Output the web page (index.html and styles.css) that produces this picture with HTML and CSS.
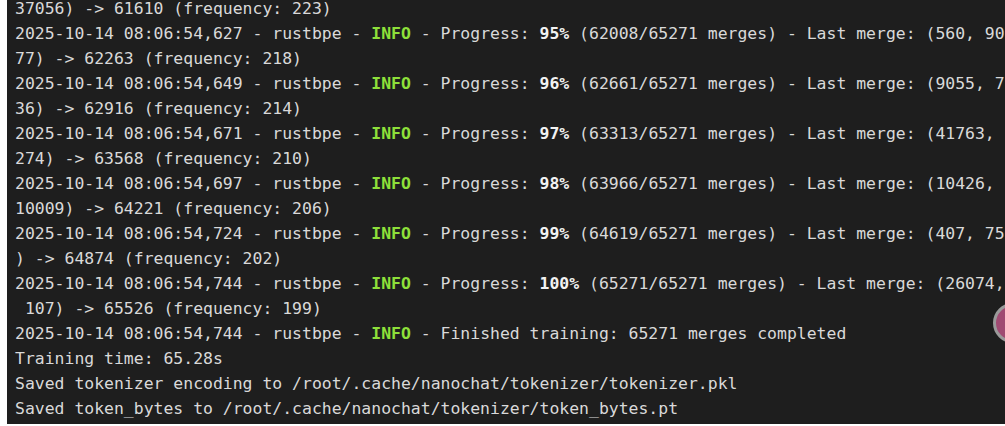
FILE: index.html
```html
<!DOCTYPE html>
<html>
<head>
<meta charset="utf-8">
<link rel="stylesheet" href="styles.css">
</head>
<body>
<div class="terminal">
<div class="log">
<div class="ln">37056) -&gt; 61610 (frequency: 223)</div>
<div class="ln">2025-10-14 08:06:54,627 - rustbpe - <span class="info">INFO</span> - Progress: <b>95%</b> (62008/65271 merges) - Last merge: (560, 90</div>
<div class="ln">77) -&gt; 62263 (frequency: 218)</div>
<div class="ln">2025-10-14 08:06:54,649 - rustbpe - <span class="info">INFO</span> - Progress: <b>96%</b> (62661/65271 merges) - Last merge: (9055, 7</div>
<div class="ln">36) -&gt; 62916 (frequency: 214)</div>
<div class="ln">2025-10-14 08:06:54,671 - rustbpe - <span class="info">INFO</span> - Progress: <b>97%</b> (63313/65271 merges) - Last merge: (41763,</div>
<div class="ln">274) -&gt; 63568 (frequency: 210)</div>
<div class="ln">2025-10-14 08:06:54,697 - rustbpe - <span class="info">INFO</span> - Progress: <b>98%</b> (63966/65271 merges) - Last merge: (10426,</div>
<div class="ln">10009) -&gt; 64221 (frequency: 206)</div>
<div class="ln">2025-10-14 08:06:54,724 - rustbpe - <span class="info">INFO</span> - Progress: <b>99%</b> (64619/65271 merges) - Last merge: (407, 75</div>
<div class="ln">) -&gt; 64874 (frequency: 202)</div>
<div class="ln">2025-10-14 08:06:54,744 - rustbpe - <span class="info">INFO</span> - Progress: <b>100%</b> (65271/65271 merges) - Last merge: (26074,</div>
<div class="ln"> 107) -&gt; 65526 (frequency: 199)</div>
<div class="ln">2025-10-14 08:06:54,744 - rustbpe - <span class="info">INFO</span> - Finished training: 65271 merges completed</div>
<div class="ln">Training time: 65.28s</div>
<div class="ln">Saved tokenizer encoding to /root/.cache/nanochat/tokenizer/tokenizer.pkl</div>
<div class="ln">Saved token_bytes to /root/.cache/nanochat/tokenizer/token_bytes.pt</div>
</div>
<div class="bubble"></div>
</div>
</body>
</html>
```

FILE: styles.css
```css
html, body {
  margin: 0;
  padding: 0;
  background: #ffffff;
  overflow: hidden;
}

.terminal {
  position: relative;
  margin-left: 7px;
  height: 424px;
  background: #1e1e1e;
  overflow: hidden;
  padding-left: 8px;
}

.log {
  display: flex;
  flex-direction: column;
  margin-top: -4px;
  font-family: "DejaVu Sans Mono", "Liberation Mono", monospace;
  font-size: 16.45px;
  line-height: 25px;
  color: #d9d9d9;
}

.ln {
  height: 25px;
  white-space: pre;
}

.ln b {
  color: #f2f2f2;
  font-weight: bold;
}

.info {
  color: #8ee03a;
  font-weight: bold;
}

.bubble {
  position: absolute;
  left: 986px;
  top: 303px;
  width: 34px;
  height: 34px;
  border-radius: 50%;
  border: 3px solid #9a9a9a;
  background: #a04a72;
}
```
